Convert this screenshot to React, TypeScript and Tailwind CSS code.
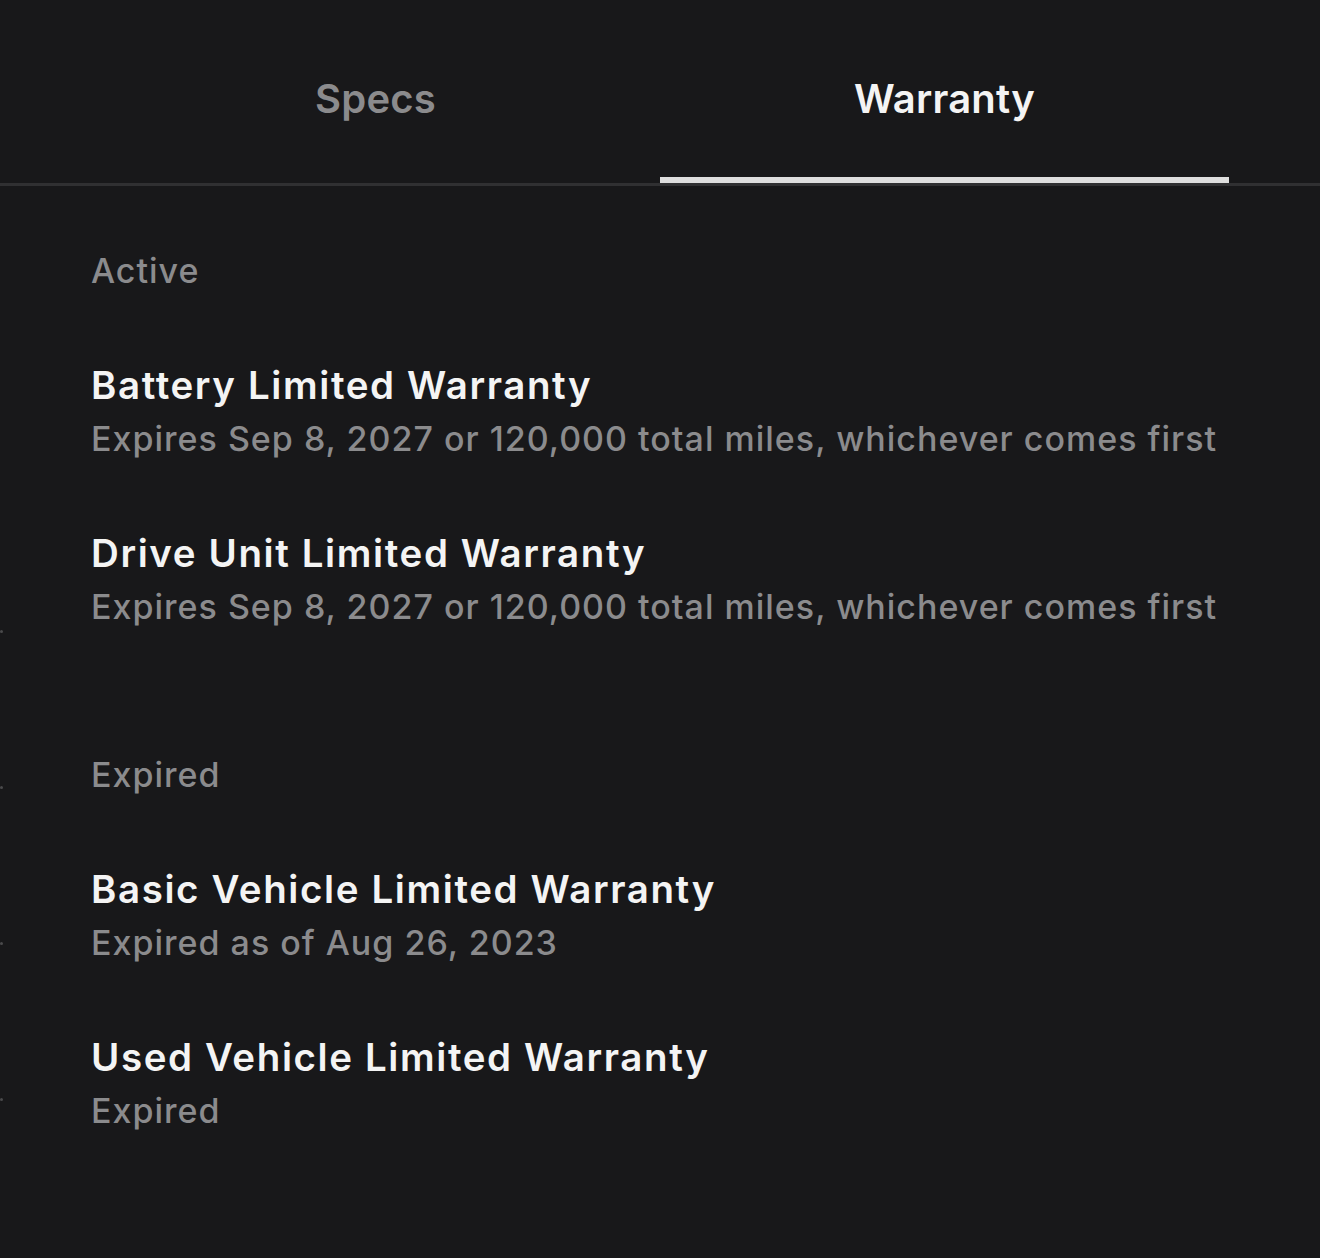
import React, { useState } from 'react';

type Item = { title: string; detail: string };

const active: Item[] = [
  {
    title: 'Battery Limited Warranty',
    detail: 'Expires Sep 8, 2027 or 120,000 total miles, whichever comes first',
  },
  {
    title: 'Drive Unit Limited Warranty',
    detail: 'Expires Sep 8, 2027 or 120,000 total miles, whichever comes first',
  },
];

const expired: Item[] = [
  { title: 'Basic Vehicle Limited Warranty', detail: 'Expired as of Aug 26, 2023' },
  { title: 'Used Vehicle Limited Warranty', detail: 'Expired' },
];

function Section({ label, items }: { label: string; items: Item[] }) {
  return (
    <div className="flex flex-col gap-[60px]">
      <h3 className="text-[34px] leading-[54px] font-medium text-[#8b8b8d] tracking-[1px]">{label}</h3>
      {items.map((it) => (
        <div key={it.title} className="flex flex-col">
          <p className="text-[38.5px] leading-[54px] font-semibold text-[#f4f4f4] tracking-[1.6px]">{it.title}</p>
          <p className="text-[34px] leading-[54px] font-medium text-[#8b8b8d] tracking-[1px]">{it.detail}</p>
        </div>
      ))}
    </div>
  );
}

export default function App() {
  const [tab, setTab] = useState<'specs' | 'warranty'>('warranty');

  return (
    <div
      className="relative w-[1320px] h-[1258px] bg-[#18181a] overflow-hidden"
      style={{ fontFamily: 'Inter, "Noto Sans", sans-serif' }}
    >
      {/* tabs */}
      <div className="flex h-[186px] border-b-[3px] border-[#303032] px-[91px]">
        {(['specs', 'warranty'] as const).map((t) => (
          <button
            key={t}
            onClick={() => setTab(t)}
            className={
              'flex-1 flex items-center justify-center relative pt-[14px] text-[40px] font-semibold tracking-[0.2px] ' +
              (tab === t ? 'text-[#f4f4f4]' : 'text-[#8b8b8d]')
            }
          >
            {t === 'specs' ? 'Specs' : 'Warranty'}
            {tab === t && <span className="absolute left-0 right-0 bottom-[0px] h-[6px] bg-[#dedede]" />}
          </button>
        ))}
      </div>

      {/* stray markers on the left edge */}
      <span className="absolute left-0 top-[630px] w-[3px] h-[3px] rounded-full bg-[#4a4a4c]" />
      <span className="absolute left-0 top-[786px] w-[3px] h-[3px] rounded-full bg-[#4a4a4c]" />
      <span className="absolute left-0 top-[942px] w-[3px] h-[3px] rounded-full bg-[#4a4a4c]" />
      <span className="absolute left-0 top-[1098px] w-[3px] h-[3px] rounded-full bg-[#4a4a4c]" />

      <div className="flex flex-col gap-[114px] pl-[91px] pt-[58px]">
        <Section label="Active" items={active} />
        <Section label="Expired" items={expired} />
      </div>
    </div>
  );
}
